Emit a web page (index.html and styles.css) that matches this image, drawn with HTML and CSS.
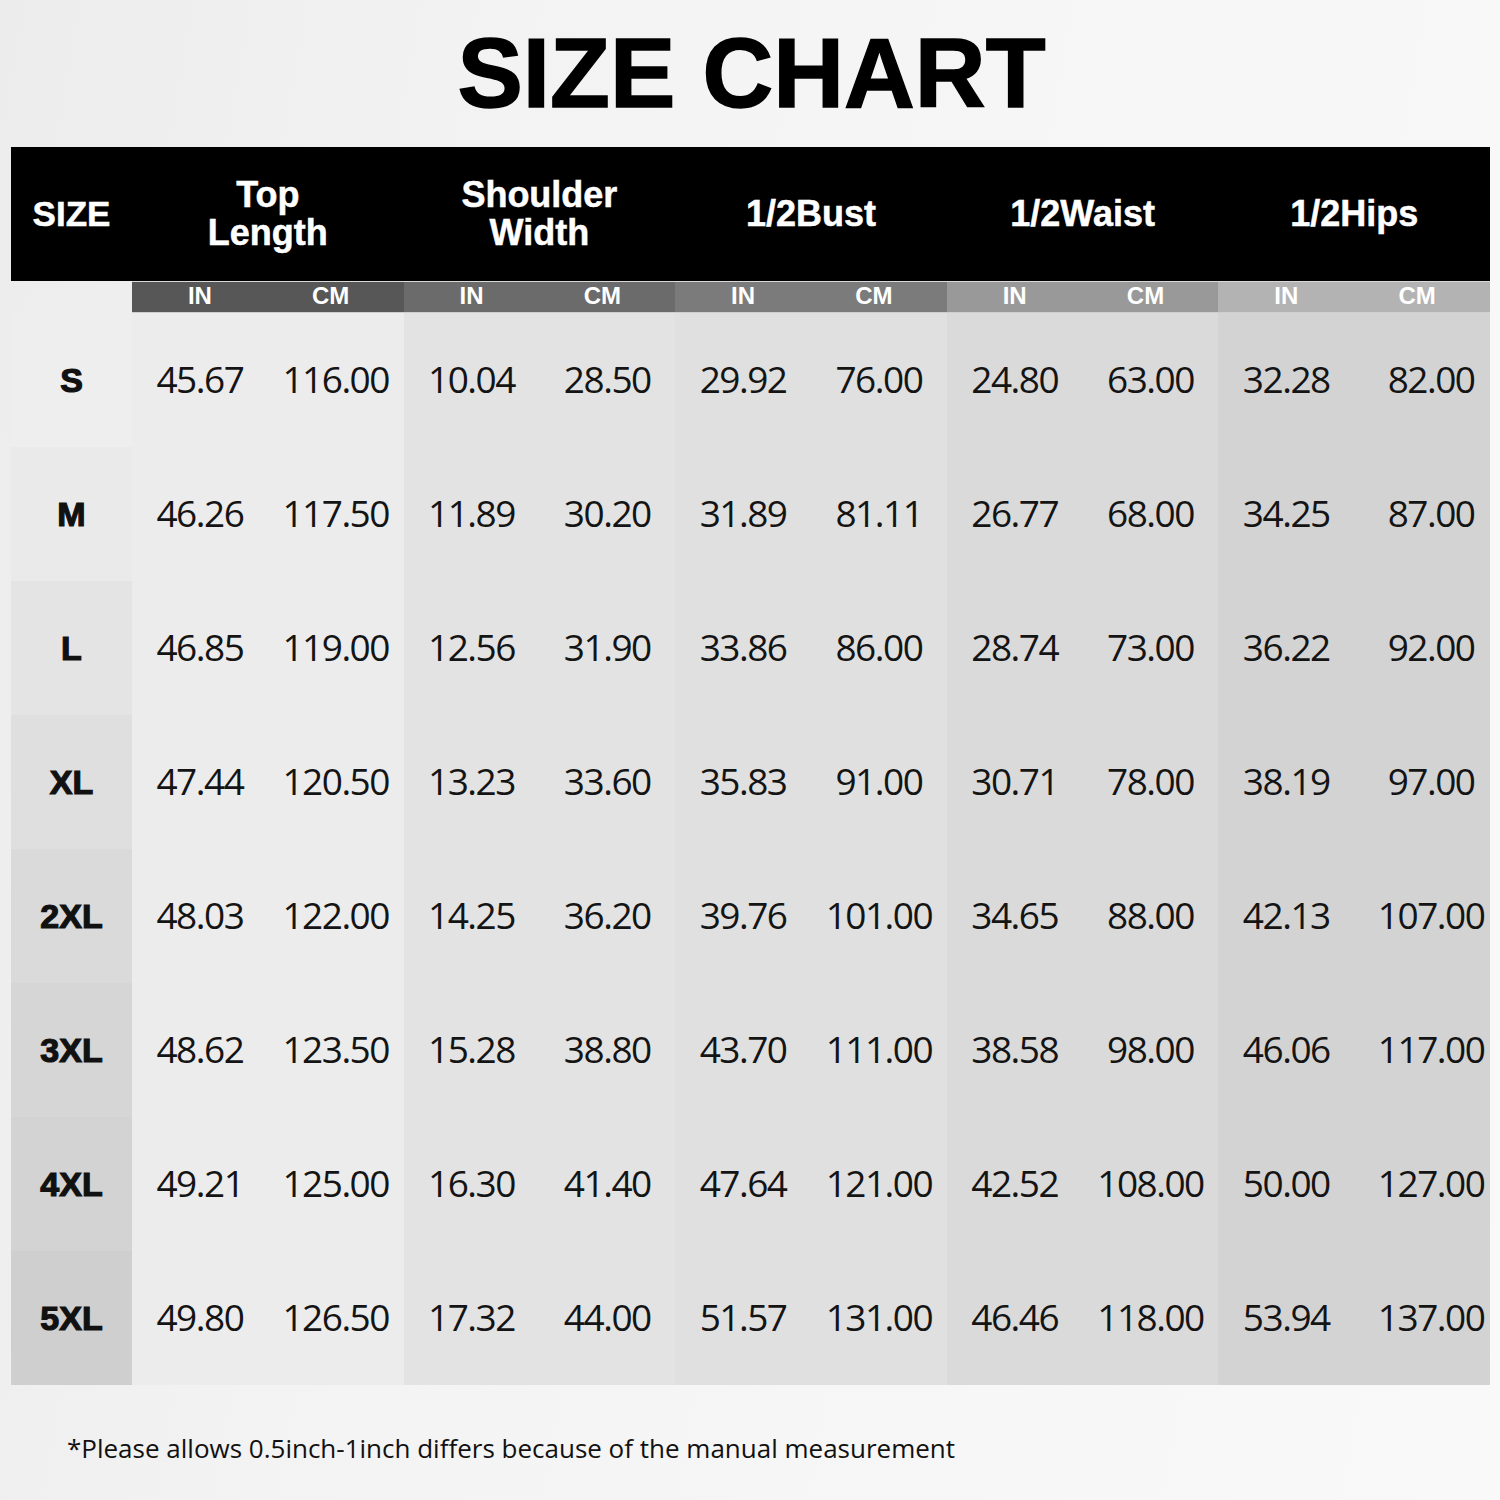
FILE: index.html
```html
<!DOCTYPE html>
<html lang="en">
<head>
<meta charset="utf-8">
<title>Size Chart</title>
<link rel="stylesheet" href="styles.css">
</head>
<body>
<div class="page">
  <h1 class="title">SIZE CHART</h1>
  <div class="chart">
    <div class="head size-h">SIZE</div>
    <div class="head group-h">Top<br>Length</div>
    <div class="head group-h">Shoulder<br>Width</div>
    <div class="head group-h">1/2Bust</div>
    <div class="head group-h">1/2Waist</div>
    <div class="head group-h">1/2Hips</div>

    <div class="unit blank"></div>
    <div class="unit g1">IN</div><div class="unit cm g1">CM</div>
    <div class="unit g2">IN</div><div class="unit cm g2">CM</div>
    <div class="unit g3">IN</div><div class="unit cm g3">CM</div>
    <div class="unit g4">IN</div><div class="unit cm g4">CM</div>
    <div class="unit g5">IN</div><div class="unit cm g5">CM</div>

    <div class="size r1">S</div>
    <div class="v c1">45.67</div><div class="v c1">116.00</div><div class="v c2">10.04</div><div class="v c2">28.50</div><div class="v c3">29.92</div><div class="v c3">76.00</div><div class="v c4">24.80</div><div class="v c4">63.00</div><div class="v c5">32.28</div><div class="v c5 last">82.00</div>

    <div class="size r2">M</div>
    <div class="v c1">46.26</div><div class="v c1">117.50</div><div class="v c2">11.89</div><div class="v c2">30.20</div><div class="v c3">31.89</div><div class="v c3">81.11</div><div class="v c4">26.77</div><div class="v c4">68.00</div><div class="v c5">34.25</div><div class="v c5 last">87.00</div>

    <div class="size r3">L</div>
    <div class="v c1">46.85</div><div class="v c1">119.00</div><div class="v c2">12.56</div><div class="v c2">31.90</div><div class="v c3">33.86</div><div class="v c3">86.00</div><div class="v c4">28.74</div><div class="v c4">73.00</div><div class="v c5">36.22</div><div class="v c5 last">92.00</div>

    <div class="size r4">XL</div>
    <div class="v c1">47.44</div><div class="v c1">120.50</div><div class="v c2">13.23</div><div class="v c2">33.60</div><div class="v c3">35.83</div><div class="v c3">91.00</div><div class="v c4">30.71</div><div class="v c4">78.00</div><div class="v c5">38.19</div><div class="v c5 last">97.00</div>

    <div class="size r5">2XL</div>
    <div class="v c1">48.03</div><div class="v c1">122.00</div><div class="v c2">14.25</div><div class="v c2">36.20</div><div class="v c3">39.76</div><div class="v c3">101.00</div><div class="v c4">34.65</div><div class="v c4">88.00</div><div class="v c5">42.13</div><div class="v c5 last">107.00</div>

    <div class="size r6">3XL</div>
    <div class="v c1">48.62</div><div class="v c1">123.50</div><div class="v c2">15.28</div><div class="v c2">38.80</div><div class="v c3">43.70</div><div class="v c3">111.00</div><div class="v c4">38.58</div><div class="v c4">98.00</div><div class="v c5">46.06</div><div class="v c5 last">117.00</div>

    <div class="size r7">4XL</div>
    <div class="v c1">49.21</div><div class="v c1">125.00</div><div class="v c2">16.30</div><div class="v c2">41.40</div><div class="v c3">47.64</div><div class="v c3">121.00</div><div class="v c4">42.52</div><div class="v c4">108.00</div><div class="v c5">50.00</div><div class="v c5 last">127.00</div>

    <div class="size r8">5XL</div>
    <div class="v c1">49.80</div><div class="v c1">126.50</div><div class="v c2">17.32</div><div class="v c2">44.00</div><div class="v c3">51.57</div><div class="v c3">131.00</div><div class="v c4">46.46</div><div class="v c4">118.00</div><div class="v c5">53.94</div><div class="v c5 last">137.00</div>
  </div>
  <p class="note">*Please allows 0.5inch-1inch differs because of the manual measurement</p>
</div>
</body>
</html>
```

FILE: styles.css
```css
* { box-sizing: border-box; }
html, body { margin: 0; padding: 0; }
body {
  width: 1500px;
  height: 1500px;
  overflow: hidden;
  background: linear-gradient(100deg, #ececec 0%, #f3f3f3 30%, #f6f6f6 60%, #f9f9f9 100%);
  font-family: "Liberation Sans", Arial, sans-serif;
}
.page {
  padding: 0 10px 0 11px;
}
.title {
  margin: 0 0 25px 0;
  padding-top: 24px;
  font-size: 98px;
  line-height: 98px;
  font-weight: 700;
  text-align: center;
  color: #000;
  -webkit-text-stroke: 1.5px #000;
  padding-left: 2px;
}
.chart {
  display: grid;
  grid-template-columns: 121px repeat(10, 1fr);
  grid-template-rows: 134px 32px repeat(8, 134px);
  width: 1479px;
}
.head {
  background: #000;
  color: #fff;
  font-weight: 700;
  font-size: 36px;
  line-height: 38px;
  display: flex;
  align-items: center;
  justify-content: center;
  text-align: center;
  -webkit-text-stroke: 0.5px #fff;
}
.size-h { font-size: 35px; }
.group-h { grid-column: span 2; }
.unit {
  color: #fff;
  font-weight: 700;
  font-size: 24px;
  display: flex;
  align-items: center;
  justify-content: center;
  border-top: 1px solid #d9d9d9;
  border-bottom: 1px solid #cfcfcf;
  padding-bottom: 2px;
}
.unit.cm { padding-right: 10px; }
.unit.blank { background: transparent; border: none; }
.g1 { background: #575757; }
.g2 { background: #6b6b6b; }
.g3 { background: #7b7b7b; }
.g4 { background: #999999; }
.g5 { background: #b3b3b3; }
.size {
  display: flex;
  align-items: center;
  justify-content: center;
  font-weight: 700;
  font-size: 34px;
  color: #111;
  -webkit-text-stroke: 1.2px #111;
}
.r1 { background: #eeeeee; }
.r2 { background: #eaeaea; }
.r3 { background: #e4e4e4; }
.r4 { background: #dfdfdf; }
.r5 { background: #dadada; }
.r6 { background: #d6d6d6; }
.r7 { background: #d3d3d3; }
.r8 { background: #cfcfcf; }
.v {
  display: flex;
  align-items: center;
  justify-content: center;
  font-family: "Open Sans", "Liberation Sans", sans-serif;
  font-size: 37px;
  letter-spacing: -1.5px;
  color: #141414;
  padding-bottom: 3px;
}
.v.last { padding-left: 18px; }
.c1 { background: #ececec; }
.c2 { background: #e3e3e3; }
.c3 { background: #e0e0e0; }
.c4 { background: #dadada; }
.c5 { background: #d3d3d3; }
.note {
  margin: 48px 0 0 0;
  padding-left: 56px;
  font-family: "Open Sans", "Liberation Sans", sans-serif;
  font-size: 26px;
  line-height: 30px;
  letter-spacing: 0;
  color: #111;
}
```
